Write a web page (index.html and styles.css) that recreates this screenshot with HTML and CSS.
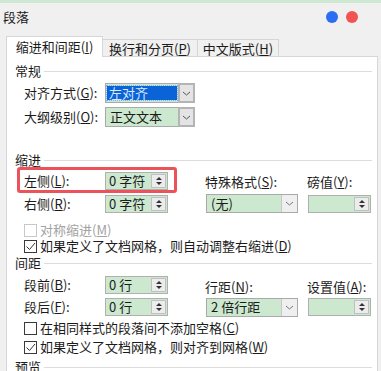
FILE: index.html
```html
<!DOCTYPE html>
<html lang="zh">
<head>
<meta charset="utf-8">
<title>段落</title>
<link rel="stylesheet" href="styles.css">
</head>
<body>
<div class="strip"></div>
<div class="titlebar">
  <span class="title">段落</span>
  <span class="dots"><span class="dot blue"></span><span class="dot red"></span></span>
</div>
<div class="tabs">
  <div class="tab active">缩进和间距(<u>I</u>)</div>
  <div class="tab t2">换行和分页(<u>P</u>)</div>
  <div class="tab t3">中文版式(<u>H</u>)</div>
  <div class="tabfill"></div>
</div>
<div class="panel">
  <div class="heading"><span>常规</span><i class="hline"></i></div>
  <div class="row r1">
    <span class="lbl">对齐方式(<u>G</u>):</span>
    <span class="select sel-a"><span class="val focus">左对齐</span><span class="dd"><svg width="9" height="5" viewBox="0 0 9 5"><path d="M1 1 L4.5 4 L8 1" fill="none" stroke="#555" stroke-width="1"/></svg></span></span>
  </div>
  <div class="row r1">
    <span class="lbl">大纲级别(<u>O</u>):</span>
    <span class="select sel-a"><span class="val">正文文本</span><span class="dd"><svg width="9" height="5" viewBox="0 0 9 5"><path d="M1 1 L4.5 4 L8 1" fill="none" stroke="#555" stroke-width="1"/></svg></span></span>
  </div>

  <div class="heading h-indent"><span>缩进</span><i class="hline"></i></div>
  <div class="row r2">
    <div class="hl">
      <span class="lbl">左侧(<u>L</u>):</span>
      <span class="spin"><span class="val">0 字符</span><span class="sb"><i class="up"></i><i class="dn"></i></span></span>
    </div>
    <span class="lbl2 lbl-b">特殊格式(<u>S</u>):</span>
    <span class="lbl2">磅值(<u>Y</u>):</span>
  </div>
  <div class="row r2">
    <span class="lbl">右侧(<u>R</u>):</span>
    <span class="spin"><span class="val">0 字符</span><span class="sb"><i class="up"></i><i class="dn"></i></span></span>
    <span class="select sel-b"><span class="val">(无)</span><span class="dd light"><svg width="9" height="5" viewBox="0 0 9 5"><path d="M1 1 L4.5 4 L8 1" fill="none" stroke="#777" stroke-width="1"/></svg></span></span>
    <span class="spin spin-c"><span class="val"></span><span class="sb"><i class="up"></i><i class="dn"></i></span></span>
  </div>

  <div class="check c-first disabled"><span class="box"></span><span>对称缩进(<u>M</u>)</span></div>
  <div class="check"><span class="box"><svg width="11" height="11" viewBox="0 0 11 11"><path d="M1.5 5.5 L4.5 8.5 L10 2" fill="none" stroke="#333" stroke-width="1"/></svg></span><span>如果定义了文档网格，则自动调整右缩进(<u>D</u>)</span></div>

  <div class="heading h-space"><span>间距</span><i class="hline"></i></div>
  <div class="row r3 r3a">
    <span class="lbl">段前(<u>B</u>):</span>
    <span class="spin"><span class="val">0 行</span><span class="sb"><i class="up"></i><i class="dn"></i></span></span>
    <span class="lbl2 lbl-b">行距(<u>N</u>):</span>
    <span class="lbl2">设置值(<u>A</u>):</span>
  </div>
  <div class="row r3">
    <span class="lbl">段后(<u>F</u>):</span>
    <span class="spin"><span class="val">0 行</span><span class="sb"><i class="up"></i><i class="dn"></i></span></span>
    <span class="select sel-b"><span class="val">2 倍行距</span><span class="dd light"><svg width="9" height="5" viewBox="0 0 9 5"><path d="M1 1 L4.5 4 L8 1" fill="none" stroke="#777" stroke-width="1"/></svg></span></span>
    <span class="spin spin-c"><span class="val"></span><span class="sb"><i class="up"></i><i class="dn"></i></span></span>
  </div>
  <div class="check c-a"><span class="box"></span><span>在相同样式的段落间不添加空格(<u>C</u>)</span></div>
  <div class="check c-b"><span class="box"><svg width="11" height="11" viewBox="0 0 11 11"><path d="M1.5 5.5 L4.5 8.5 L10 2" fill="none" stroke="#333" stroke-width="1"/></svg></span><span>如果定义了文档网格，则对齐到网格(<u>W</u>)</span></div>
  <div class="heading h-prev"><span>预览</span><i class="hline"></i></div>
</div>
</body>
</html>
```

FILE: styles.css
```css
* { box-sizing: border-box; }
html, body { margin: 0; padding: 0; }
body {
  width: 381px;
  height: 371px;
  overflow: hidden;
  background: #f0f0f0;
  color: #1b1b1b;
  font-family: "Noto Sans CJK SC", "Noto Sans", sans-serif;
  font-size: 13px;
  line-height: 16px;
}
u { text-decoration: underline; text-underline-offset: 1px; }

.strip { height: 3px; background: #cfe8d2; }
.titlebar {
  height: 28px;
  display: flex;
  align-items: center;
  justify-content: space-between;
  padding: 0 23px 0 3px;
}
.dots { display: flex; gap: 8px; }
.dot { width: 12px; height: 12px; border-radius: 50%; display: block; }
.dot.blue { background: #2b6ef2; }
.dot.red { background: #f25353; }

.tabs {
  display: flex;
  align-items: flex-end;
  margin: 5px 0 0 6px;
  width: 372px;
}
.tab {
  height: 18px;
  border-top: 1px solid #d6d6d6;
  border-right: 1px solid #d6d6d6;
  border-bottom: 1px solid #d6d6d6;
  background: #f0f0f0;
  display: flex;
  align-items: center;
  justify-content: center;
  padding-top: 1px;
}
.tab.active {
  height: 21px;
  width: 97px;
  background: #fff;
  border-left: 1px solid #d6d6d6;
  border-bottom: none;
  padding-top: 0;
}
.tab.t2 { width: 95px; }
.tab.t3 { width: 81px; }
.tabfill { flex: 1; border-bottom: 1px solid #d6d6d6; }

.panel {
  margin-left: 6px;
  width: 372px;
  height: 320px;
  background: #fff;
  border-left: 1px solid #d6d6d6;
  border-right: 1px solid #d6d6d6;
  padding: 5px 5px 0 8px;
}

.heading {
  height: 18px;
  display: flex;
  align-items: center;
}
.hline {
  flex: 1;
  height: 1px;
  background: #dcdcdc;
  margin-left: 3px;
  margin-top: 1px;
}
.h-indent { margin-top: 23px; }
.h-space { margin-top: 0; }
.h-prev { margin-top: 3px; }

.row {
  display: flex;
  align-items: center;
  margin-left: 9px;
  height: 22px;
}
.row.r1 { margin-top: 2px; }
.row.r2 { height: 23px; }
.row.r3a { margin-top: 2px; }

.lbl { width: 81px; flex: none; }
.lbl2 { width: 102px; flex: none; padding-top: 3px; }
.lbl-b { margin-left: 37px; }

.hl {
  display: flex;
  align-items: center;
  height: 100%;
  position: relative;
}
.hl::after {
  content: "";
  position: absolute;
  left: -7px;
  right: -9px;
  top: -2px;
  bottom: -1px;
  border: 3px solid #ec5259;
  border-radius: 3px;
}

.select {
  display: flex;
  align-items: stretch;
  height: 20px;
  border: 1px solid #a9a9a9;
  background: #cce8cf;
  flex: none;
}
.select .val { flex: 1; padding-left: 4px; display: flex; align-items: center; }
.sel-a { width: 90px; }
.sel-a .val.focus {
  margin: 2px 1px 2px 1px;
  padding-left: 2px;
  background: #0b63d8;
  color: #dbe8ff;
  outline: 1px dotted #7fb0ff;
}
.dd {
  width: 17px;
  background: #e4e4e4;
  border: 2px solid #b4b4b4;
  margin: -1px -1px -1px 0;
  display: flex;
  align-items: center;
  justify-content: center;
}
.sel-b { width: 92px; height: 19px; margin-left: 38px; }
.dd.light { border: 1px solid #c8c8c8; border-width: 0 0 0 1px; margin: 0; background: #efefef; width: 16px; }

.spin {
  display: flex;
  align-items: stretch;
  width: 63px;
  height: 18px;
  border: 1px solid #b0b0b0;
  background: #cce8cf;
  flex: none;
}
.spin .val { flex: 1; padding-left: 3px; display: flex; align-items: center; }
.spin-c { margin-left: 10px; }
.sb {
  width: 15px;
  margin: 1px 1px 1px 0;
  background: #ececec;
  border: 1px solid #c0c0c0;
  display: flex;
  flex-direction: column;
  align-items: center;
  justify-content: center;
  gap: 2px;
}
.sb i { display: block; width: 0; height: 0; border-left: 3px solid transparent; border-right: 3px solid transparent; }
.sb .up { border-bottom: 3px solid #333; }
.sb .dn { border-top: 3px solid #333; }

.check {
  display: flex;
  align-items: center;
  margin-left: 9px;
  height: 16px;
  gap: 3px;
}
.check .box {
  width: 13px;
  height: 13px;
  border: 1px solid #3a3a3a;
  background: #fff;
  display: flex;
  align-items: center;
  justify-content: center;
}
.check.disabled { color: #a2a2a2; }
.check.disabled .box { border-color: #c8c8c8; }
.c-first { margin-top: 7px; }
.c-a { margin-top: 2px; }
.c-b { margin-top: 3px; }
```
